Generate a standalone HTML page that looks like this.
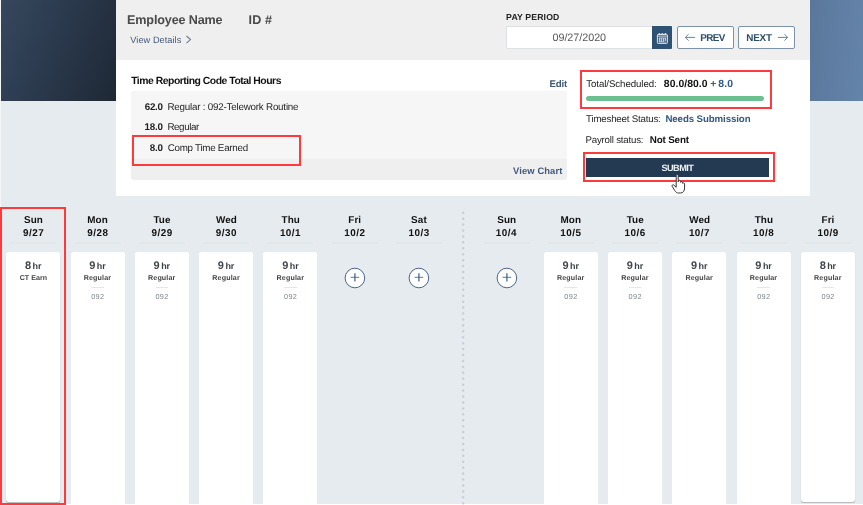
<!DOCTYPE html>
<html><head><meta charset="utf-8"><style>
html,body{margin:0;padding:0;width:863px;height:505px;overflow:hidden;background:#fff;position:relative}
body{font-family:"Liberation Sans", sans-serif}
.t{position:absolute;line-height:1;white-space:nowrap;text-rendering:geometricPrecision}
</style></head><body>
<div style="position:absolute;left:0;top:0;width:863px;height:503.7px;background:#e6ebef"></div>
<div style="position:absolute;left:0;top:0;width:116px;height:100.5px;background:linear-gradient(112deg,#36485e 0%,#2a384b 50%,#1e2835 100%)"></div>
<div style="position:absolute;left:810px;top:0;width:53px;height:100.5px;background:linear-gradient(95deg,#5a779b 0%,#6584aa 100%)"></div>
<div style="position:absolute;left:0;top:0;width:1px;height:505px;background:#f4f6f8"></div>
<div style="position:absolute;left:116px;top:0;width:694px;height:60px;background:#efefef"></div>
<div style="position:absolute;left:116px;top:60px;width:694px;height:136px;background:#fff"></div>
<div style="position:absolute;left:130.5px;top:91.3px;width:436.3px;height:89.2px;background:#efefef;border-radius:3px;overflow:hidden"><div style="height:67.6px;background:#f6f6f6"></div></div>
<svg style="position:absolute;left:184px;top:35px" width="9" height="9" viewBox="0 0 9 9"><path d="M2.5 1 L6.5 4.6 L2.5 8.2" fill="none" stroke="#5f7a94" stroke-width="1.05"/></svg>
<div style="position:absolute;left:506.3px;top:25.8px;width:146px;height:23.2px;background:#fff;border:1px solid #dde2e6;border-right:none;box-sizing:border-box;border-radius:2px 0 0 2px"></div>
<div style="position:absolute;left:652.2px;top:25.9px;width:20px;height:23.1px;background:#2f5274;border-radius:0 1px 1px 0"></div>
<svg style="position:absolute;left:656px;top:32px" width="13" height="13" viewBox="0 0 13 13">
<rect x="1.4" y="2.5" width="10" height="8.9" rx="0.7" fill="none" stroke="#dfe6ec" stroke-width="1"/>
<line x1="1.4" y1="4.1" x2="11.4" y2="4.1" stroke="#dfe6ec" stroke-width="0.9"/>
<circle cx="3.4" cy="1.8" r="0.85" fill="#dfe6ec"/><circle cx="6.4" cy="1.8" r="0.85" fill="#dfe6ec"/><circle cx="9.4" cy="1.8" r="0.85" fill="#dfe6ec"/>
<rect x="3.3" y="6" width="6.4" height="3.9" fill="none" stroke="#dfe6ec" stroke-width="0.9"/>
<line x1="5.4" y1="6" x2="5.4" y2="9.9" stroke="#dfe6ec" stroke-width="0.7"/>
<line x1="7.5" y1="6" x2="7.5" y2="9.9" stroke="#dfe6ec" stroke-width="0.7"/>
<line x1="3.3" y1="8" x2="9.7" y2="8" stroke="#dfe6ec" stroke-width="0.6"/>
<path d="M8.2 9.9 L9.7 8.4 L9.7 9.9 Z" fill="#2f5274"/>
</svg>
<div style="position:absolute;left:676.9px;top:25.5px;width:56.9px;height:23.9px;border:1.8px solid #7b92a7;box-sizing:border-box;background:#fff;border-radius:2px"></div>
<div style="position:absolute;left:738.2px;top:25.5px;width:57px;height:23.9px;border:1.8px solid #7b92a7;box-sizing:border-box;background:#fff;border-radius:2px"></div>
<svg style="position:absolute;left:684px;top:33px" width="12" height="9" viewBox="0 0 12 9"><path d="M11 4.4 H1.3 M4.6 1.2 L1.3 4.4 L4.6 7.6" fill="none" stroke="#6a8299" stroke-width="1"/></svg>
<svg style="position:absolute;left:776.5px;top:33px" width="12" height="9" viewBox="0 0 12 9"><path d="M1 4.4 H10.7 M7.4 1.2 L10.7 4.4 L7.4 7.6" fill="none" stroke="#6a8299" stroke-width="1"/></svg>
<div style="position:absolute;left:132px;top:134.9px;width:168.5px;height:30.7px;border:2.4px solid #ff3a3d;box-sizing:border-box"></div>
<div style="position:absolute;left:579.95px;top:69.8px;width:191.85px;height:39px;border:2.5px solid #ff3a3d;box-sizing:border-box"></div>
<div style="position:absolute;left:586px;top:95.9px;width:178.2px;height:4.8px;background:#6cc08f;border-radius:3px"></div>
<div style="position:absolute;left:583.2px;top:152.1px;width:191.55px;height:30.4px;border:2.6px solid #ff3a3d;box-sizing:border-box"></div>
<div style="position:absolute;left:586.1px;top:157.6px;width:183.1px;height:19.25px;background:#233a52"></div>
<svg style="position:absolute;left:461px;top:210px" width="5" height="295"><line x1="2.1" y1="2.7" x2="2.1" y2="295" stroke="#c8cfd6" stroke-width="2.5" stroke-linecap="round" stroke-dasharray="0.01 5.92"/></svg>
<div style="position:absolute;left:10.30px;top:241.8px;width:46px;height:2px;background:#e2e7eb"></div>
<div style="position:absolute;left:6.30px;top:252.2px;width:54px;height:249.8px;background:#fff;border-radius:3px;box-shadow:0 1.5px 1px -0.5px rgba(0,0,0,0.22)"></div>
<div style="position:absolute;left:74.58px;top:241.8px;width:46px;height:2px;background:#e2e7eb"></div>
<div style="position:absolute;left:70.58px;top:252.2px;width:54px;height:260px;background:#fff;border-radius:2.5px 2.5px 0 0"></div>
<div style="position:absolute;left:91.28px;top:286.8px;width:12.6px;height:1px;background:#e6e6e6"></div>
<div style="position:absolute;left:138.86px;top:241.8px;width:46px;height:2px;background:#e2e7eb"></div>
<div style="position:absolute;left:134.86px;top:252.2px;width:54px;height:260px;background:#fff;border-radius:2.5px 2.5px 0 0"></div>
<div style="position:absolute;left:155.56px;top:286.8px;width:12.6px;height:1px;background:#e6e6e6"></div>
<div style="position:absolute;left:203.14px;top:241.8px;width:46px;height:2px;background:#e2e7eb"></div>
<div style="position:absolute;left:199.14px;top:252.2px;width:54px;height:260px;background:#fff;border-radius:2.5px 2.5px 0 0"></div>
<div style="position:absolute;left:267.42px;top:241.8px;width:46px;height:2px;background:#e2e7eb"></div>
<div style="position:absolute;left:263.42px;top:252.2px;width:54px;height:260px;background:#fff;border-radius:2.5px 2.5px 0 0"></div>
<div style="position:absolute;left:284.12px;top:286.8px;width:12.6px;height:1px;background:#e6e6e6"></div>
<div style="position:absolute;left:331.70px;top:241.8px;width:46px;height:2px;background:#e2e7eb"></div>
<svg style="position:absolute;left:343.70px;top:266.5px" width="22" height="22" viewBox="0 0 22 22"><circle cx="10.9" cy="11" r="9.8" fill="#fff" stroke="#4a6884" stroke-width="1"/><path d="M6.6 10.3 H15.2" stroke="#4a6884" stroke-width="0.9"/><path d="M10.9 6.2 V14.5" stroke="#4a6884" stroke-width="1.3"/></svg>
<div style="position:absolute;left:395.98px;top:241.8px;width:46px;height:2px;background:#e2e7eb"></div>
<svg style="position:absolute;left:407.98px;top:266.5px" width="22" height="22" viewBox="0 0 22 22"><circle cx="10.9" cy="11" r="9.8" fill="#fff" stroke="#4a6884" stroke-width="1"/><path d="M6.6 10.3 H15.2" stroke="#4a6884" stroke-width="0.9"/><path d="M10.9 6.2 V14.5" stroke="#4a6884" stroke-width="1.3"/></svg>
<div style="position:absolute;left:483.50px;top:241.8px;width:46px;height:2px;background:#e2e7eb"></div>
<svg style="position:absolute;left:495.50px;top:266.5px" width="22" height="22" viewBox="0 0 22 22"><circle cx="10.9" cy="11" r="9.8" fill="#fff" stroke="#4a6884" stroke-width="1"/><path d="M6.6 10.3 H15.2" stroke="#4a6884" stroke-width="0.9"/><path d="M10.9 6.2 V14.5" stroke="#4a6884" stroke-width="1.3"/></svg>
<div style="position:absolute;left:547.78px;top:241.8px;width:46px;height:2px;background:#e2e7eb"></div>
<div style="position:absolute;left:543.78px;top:252.2px;width:54px;height:260px;background:#fff;border-radius:2.5px 2.5px 0 0"></div>
<div style="position:absolute;left:564.48px;top:286.8px;width:12.6px;height:1px;background:#e6e6e6"></div>
<div style="position:absolute;left:612.06px;top:241.8px;width:46px;height:2px;background:#e2e7eb"></div>
<div style="position:absolute;left:608.06px;top:252.2px;width:54px;height:260px;background:#fff;border-radius:2.5px 2.5px 0 0"></div>
<div style="position:absolute;left:628.76px;top:286.8px;width:12.6px;height:1px;background:#e6e6e6"></div>
<div style="position:absolute;left:676.34px;top:241.8px;width:46px;height:2px;background:#e2e7eb"></div>
<div style="position:absolute;left:672.34px;top:252.2px;width:54px;height:260px;background:#fff;border-radius:2.5px 2.5px 0 0"></div>
<div style="position:absolute;left:740.62px;top:241.8px;width:46px;height:2px;background:#e2e7eb"></div>
<div style="position:absolute;left:736.62px;top:252.2px;width:54px;height:260px;background:#fff;border-radius:2.5px 2.5px 0 0"></div>
<div style="position:absolute;left:757.32px;top:286.8px;width:12.6px;height:1px;background:#e6e6e6"></div>
<div style="position:absolute;left:804.90px;top:241.8px;width:46px;height:2px;background:#e2e7eb"></div>
<div style="position:absolute;left:800.90px;top:252.2px;width:54px;height:249.8px;background:#fff;border-radius:3px;box-shadow:0 1.5px 1px -0.5px rgba(0,0,0,0.22)"></div>
<div style="position:absolute;left:821.60px;top:286.8px;width:12.6px;height:1px;background:#e6e6e6"></div>
<div style="position:absolute;left:0px;top:206.7px;width:65.8px;height:298.3px;border:2.4px solid #ff3a3d;box-sizing:border-box"></div>
<div style="position:absolute;left:0;top:0;width:863px;height:505px;will-change:transform">
<div class="t" style="left:127.06px;top:14px;font-size:12.6px;color:#4a4a4a;font-weight:bold;letter-spacing:-0.143px;">Employee Name</div>
<div class="t" style="left:248.46px;top:14px;font-size:12.6px;color:#4a4a4a;font-weight:bold;letter-spacing:0.183px;">ID #</div>
<div class="t" style="left:130.36px;top:36px;font-size:9.2px;color:#3d5a78;letter-spacing:0.045px;">View Details</div>
<div class="t" style="left:506.12px;top:13px;font-size:8.7px;color:#222;font-weight:bold;letter-spacing:0.134px;">PAY PERIOD</div>
<div class="t" style="left:552.48px;top:33px;font-size:10.8px;color:#5a5a5a;letter-spacing:-0.044px;">09/27/2020</div>
<div class="t" style="left:700.24px;top:34px;font-size:9.9px;color:#2c4c6c;font-weight:bold;letter-spacing:-0.620px;">PREV</div>
<div class="t" style="left:746.24px;top:34px;font-size:9.9px;color:#2c4c6c;font-weight:bold;letter-spacing:-0.189px;">NEXT</div>
<div class="t" style="left:131.18px;top:77px;font-size:10.4px;color:#111;font-weight:bold;letter-spacing:-0.482px;">Time Reporting Code Total Hours</div>
<div class="t" style="left:144.84px;top:103px;font-size:9.8px;color:#222;font-weight:bold;letter-spacing:-0.336px;">62.0</div>
<div class="t" style="left:167.40px;top:103px;font-size:9.8px;color:#262626;letter-spacing:-0.210px;">Regular : 092-Telework Routine</div>
<div class="t" style="left:144.58px;top:123px;font-size:9.8px;color:#222;font-weight:bold;letter-spacing:-0.249px;">18.0</div>
<div class="t" style="left:167.40px;top:123px;font-size:9.8px;color:#262626;letter-spacing:-0.407px;">Regular</div>
<div class="t" style="left:149.69px;top:144px;font-size:9.8px;color:#222;font-weight:bold;letter-spacing:-0.203px;">8.0</div>
<div class="t" style="left:167.70px;top:144px;font-size:9.8px;color:#262626;letter-spacing:-0.263px;">Comp Time Earned</div>
<div class="t" style="left:549.45px;top:80px;font-size:9.7px;color:#3d5a78;font-weight:bold;letter-spacing:-0.210px;">Edit</div>
<div class="t" style="left:513.04px;top:166px;font-size:9.4px;color:#3d5a7a;font-weight:bold;letter-spacing:0.111px;">View Chart</div>
<div class="t" style="left:586.18px;top:80px;font-size:9.7px;color:#1a1a1a;letter-spacing:-0.068px;">Total/Scheduled:</div>
<div class="t" style="left:663.87px;top:80px;font-size:10.4px;color:#111;font-weight:bold;letter-spacing:0.040px;">80.0/80.0</div>
<div class="t" style="left:710.36px;top:80px;font-size:10.4px;color:#2f5a86;font-weight:bold;">+</div>
<div class="t" style="left:718.27px;top:80px;font-size:10.4px;color:#2f5a86;font-weight:bold;letter-spacing:0.206px;">8.0</div>
<div class="t" style="left:586.08px;top:115px;font-size:9.7px;color:#1f1f1f;letter-spacing:-0.188px;">Timesheet Status:</div>
<div class="t" style="left:665.45px;top:115px;font-size:9.7px;color:#34597f;font-weight:bold;letter-spacing:-0.101px;">Needs Submission</div>
<div class="t" style="left:585.50px;top:136px;font-size:9.7px;color:#1f1f1f;letter-spacing:-0.204px;">Payroll status:</div>
<div class="t" style="left:649.84px;top:136px;font-size:9.8px;color:#111;font-weight:bold;letter-spacing:-0.157px;">Not Sent</div>
<div class="t" style="left:661.43px;top:164px;font-size:9.2px;color:#eef1f4;font-weight:bold;letter-spacing:-0.550px;">SUBMIT</div>
<div class="t" style="left:24.04px;top:216px;font-size:9.9px;color:#111;font-weight:bold;letter-spacing:0.100px;">Sun</div>
<div class="t" style="left:22.99px;top:229px;font-size:9.9px;color:#111;font-weight:bold;letter-spacing:0.500px;">9/27</div>
<div class="t" style="left:25.05px;top:261px;font-size:11px;color:#41464d;font-weight:bold;">8</div>
<div class="t" style="left:32.57px;top:262px;font-size:9.0px;color:#3a3f47;font-weight:bold;letter-spacing:-0.035px;">hr</div>
<div class="t" style="left:19.66px;top:275px;font-size:7.1px;color:#444;font-weight:bold;letter-spacing:0.039px;">CT Earn</div>
<div class="t" style="left:87.31px;top:216px;font-size:9.9px;color:#111;font-weight:bold;letter-spacing:0.100px;">Mon</div>
<div class="t" style="left:87.20px;top:229px;font-size:9.9px;color:#111;font-weight:bold;letter-spacing:0.500px;">9/28</div>
<div class="t" style="left:89.30px;top:261px;font-size:11px;color:#41464d;font-weight:bold;">9</div>
<div class="t" style="left:96.85px;top:262px;font-size:9.0px;color:#3a3f47;font-weight:bold;letter-spacing:-0.035px;">hr</div>
<div class="t" style="left:83.71px;top:275px;font-size:7.1px;color:#444;font-weight:bold;letter-spacing:0.162px;">Regular</div>
<div class="t" style="left:91.14px;top:293px;font-size:7.3px;color:#7f868e;letter-spacing:0.389px;">092</div>
<div class="t" style="left:153.46px;top:216px;font-size:9.9px;color:#111;font-weight:bold;letter-spacing:0.100px;">Tue</div>
<div class="t" style="left:151.51px;top:229px;font-size:9.9px;color:#111;font-weight:bold;letter-spacing:0.500px;">9/29</div>
<div class="t" style="left:153.58px;top:261px;font-size:11px;color:#41464d;font-weight:bold;">9</div>
<div class="t" style="left:161.13px;top:262px;font-size:9.0px;color:#3a3f47;font-weight:bold;letter-spacing:-0.035px;">hr</div>
<div class="t" style="left:147.99px;top:275px;font-size:7.1px;color:#444;font-weight:bold;letter-spacing:0.162px;">Regular</div>
<div class="t" style="left:155.42px;top:293px;font-size:7.3px;color:#7f868e;letter-spacing:0.389px;">092</div>
<div class="t" style="left:216.03px;top:216px;font-size:9.9px;color:#111;font-weight:bold;letter-spacing:0.100px;">Wed</div>
<div class="t" style="left:215.81px;top:229px;font-size:9.9px;color:#111;font-weight:bold;letter-spacing:0.500px;">9/30</div>
<div class="t" style="left:217.86px;top:261px;font-size:11px;color:#41464d;font-weight:bold;">9</div>
<div class="t" style="left:225.41px;top:262px;font-size:9.0px;color:#3a3f47;font-weight:bold;letter-spacing:-0.035px;">hr</div>
<div class="t" style="left:212.27px;top:275px;font-size:7.1px;color:#444;font-weight:bold;letter-spacing:0.162px;">Regular</div>
<div class="t" style="left:281.54px;top:216px;font-size:9.9px;color:#111;font-weight:bold;letter-spacing:0.100px;">Thu</div>
<div class="t" style="left:279.89px;top:229px;font-size:9.9px;color:#111;font-weight:bold;letter-spacing:0.500px;">10/1</div>
<div class="t" style="left:282.14px;top:261px;font-size:11px;color:#41464d;font-weight:bold;">9</div>
<div class="t" style="left:289.69px;top:262px;font-size:9.0px;color:#3a3f47;font-weight:bold;letter-spacing:-0.035px;">hr</div>
<div class="t" style="left:276.55px;top:275px;font-size:7.1px;color:#444;font-weight:bold;letter-spacing:0.162px;">Regular</div>
<div class="t" style="left:283.98px;top:293px;font-size:7.3px;color:#7f868e;letter-spacing:0.389px;">092</div>
<div class="t" style="left:348.31px;top:216px;font-size:9.9px;color:#111;font-weight:bold;letter-spacing:0.100px;">Fri</div>
<div class="t" style="left:344.23px;top:229px;font-size:9.9px;color:#111;font-weight:bold;letter-spacing:0.500px;">10/2</div>
<div class="t" style="left:411.11px;top:216px;font-size:9.9px;color:#111;font-weight:bold;letter-spacing:0.100px;">Sat</div>
<div class="t" style="left:408.49px;top:229px;font-size:9.9px;color:#111;font-weight:bold;letter-spacing:0.500px;">10/3</div>
<div class="t" style="left:497.24px;top:216px;font-size:9.9px;color:#111;font-weight:bold;letter-spacing:0.100px;">Sun</div>
<div class="t" style="left:495.85px;top:229px;font-size:9.9px;color:#111;font-weight:bold;letter-spacing:0.500px;">10/4</div>
<div class="t" style="left:560.51px;top:216px;font-size:9.9px;color:#111;font-weight:bold;letter-spacing:0.100px;">Mon</div>
<div class="t" style="left:560.25px;top:229px;font-size:9.9px;color:#111;font-weight:bold;letter-spacing:0.500px;">10/5</div>
<div class="t" style="left:562.50px;top:261px;font-size:11px;color:#41464d;font-weight:bold;">9</div>
<div class="t" style="left:570.05px;top:262px;font-size:9.0px;color:#3a3f47;font-weight:bold;letter-spacing:-0.035px;">hr</div>
<div class="t" style="left:556.91px;top:275px;font-size:7.1px;color:#444;font-weight:bold;letter-spacing:0.162px;">Regular</div>
<div class="t" style="left:564.34px;top:293px;font-size:7.3px;color:#7f868e;letter-spacing:0.389px;">092</div>
<div class="t" style="left:626.66px;top:216px;font-size:9.9px;color:#111;font-weight:bold;letter-spacing:0.100px;">Tue</div>
<div class="t" style="left:624.57px;top:229px;font-size:9.9px;color:#111;font-weight:bold;letter-spacing:0.500px;">10/6</div>
<div class="t" style="left:626.78px;top:261px;font-size:11px;color:#41464d;font-weight:bold;">9</div>
<div class="t" style="left:634.33px;top:262px;font-size:9.0px;color:#3a3f47;font-weight:bold;letter-spacing:-0.035px;">hr</div>
<div class="t" style="left:621.19px;top:275px;font-size:7.1px;color:#444;font-weight:bold;letter-spacing:0.162px;">Regular</div>
<div class="t" style="left:628.62px;top:293px;font-size:7.3px;color:#7f868e;letter-spacing:0.389px;">092</div>
<div class="t" style="left:689.23px;top:216px;font-size:9.9px;color:#111;font-weight:bold;letter-spacing:0.100px;">Wed</div>
<div class="t" style="left:688.89px;top:229px;font-size:9.9px;color:#111;font-weight:bold;letter-spacing:0.500px;">10/7</div>
<div class="t" style="left:691.06px;top:261px;font-size:11px;color:#41464d;font-weight:bold;">9</div>
<div class="t" style="left:698.61px;top:262px;font-size:9.0px;color:#3a3f47;font-weight:bold;letter-spacing:-0.035px;">hr</div>
<div class="t" style="left:685.47px;top:275px;font-size:7.1px;color:#444;font-weight:bold;letter-spacing:0.162px;">Regular</div>
<div class="t" style="left:754.74px;top:216px;font-size:9.9px;color:#111;font-weight:bold;letter-spacing:0.100px;">Thu</div>
<div class="t" style="left:753.10px;top:229px;font-size:9.9px;color:#111;font-weight:bold;letter-spacing:0.500px;">10/8</div>
<div class="t" style="left:755.34px;top:261px;font-size:11px;color:#41464d;font-weight:bold;">9</div>
<div class="t" style="left:762.89px;top:262px;font-size:9.0px;color:#3a3f47;font-weight:bold;letter-spacing:-0.035px;">hr</div>
<div class="t" style="left:749.75px;top:275px;font-size:7.1px;color:#444;font-weight:bold;letter-spacing:0.162px;">Regular</div>
<div class="t" style="left:757.18px;top:293px;font-size:7.3px;color:#7f868e;letter-spacing:0.389px;">092</div>
<div class="t" style="left:821.51px;top:216px;font-size:9.9px;color:#111;font-weight:bold;letter-spacing:0.100px;">Fri</div>
<div class="t" style="left:817.41px;top:229px;font-size:9.9px;color:#111;font-weight:bold;letter-spacing:0.500px;">10/9</div>
<div class="t" style="left:819.65px;top:261px;font-size:11px;color:#41464d;font-weight:bold;">8</div>
<div class="t" style="left:827.17px;top:262px;font-size:9.0px;color:#3a3f47;font-weight:bold;letter-spacing:-0.035px;">hr</div>
<div class="t" style="left:814.03px;top:275px;font-size:7.1px;color:#444;font-weight:bold;letter-spacing:0.162px;">Regular</div>
<div class="t" style="left:821.46px;top:293px;font-size:7.3px;color:#7f868e;letter-spacing:0.389px;">092</div>
</div>
<svg style="position:absolute;left:670.3px;top:172.8px" width="18" height="22" viewBox="0 0 18 22">
<path d="M6.2 2.2 C6.2 1.2 8.2 1.2 8.2 2.2 L8.2 9 L8.4 8 C8.6 7 10.4 7 10.4 8.2 L10.5 9.3 C10.8 8.4 12.5 8.4 12.5 9.6 L12.6 10.3 C13 9.6 14.6 9.8 14.6 10.9 L14.6 15 C14.6 18 13 20 10.5 20 L8.6 20 C6.8 20 5.6 19 4.6 17.3 L2.2 13.3 C1.6 12.3 2.8 11.2 3.8 12 L6.2 14.3 Z" fill="#fff" stroke="#333" stroke-width="1"/>
</svg>
</body></html>
